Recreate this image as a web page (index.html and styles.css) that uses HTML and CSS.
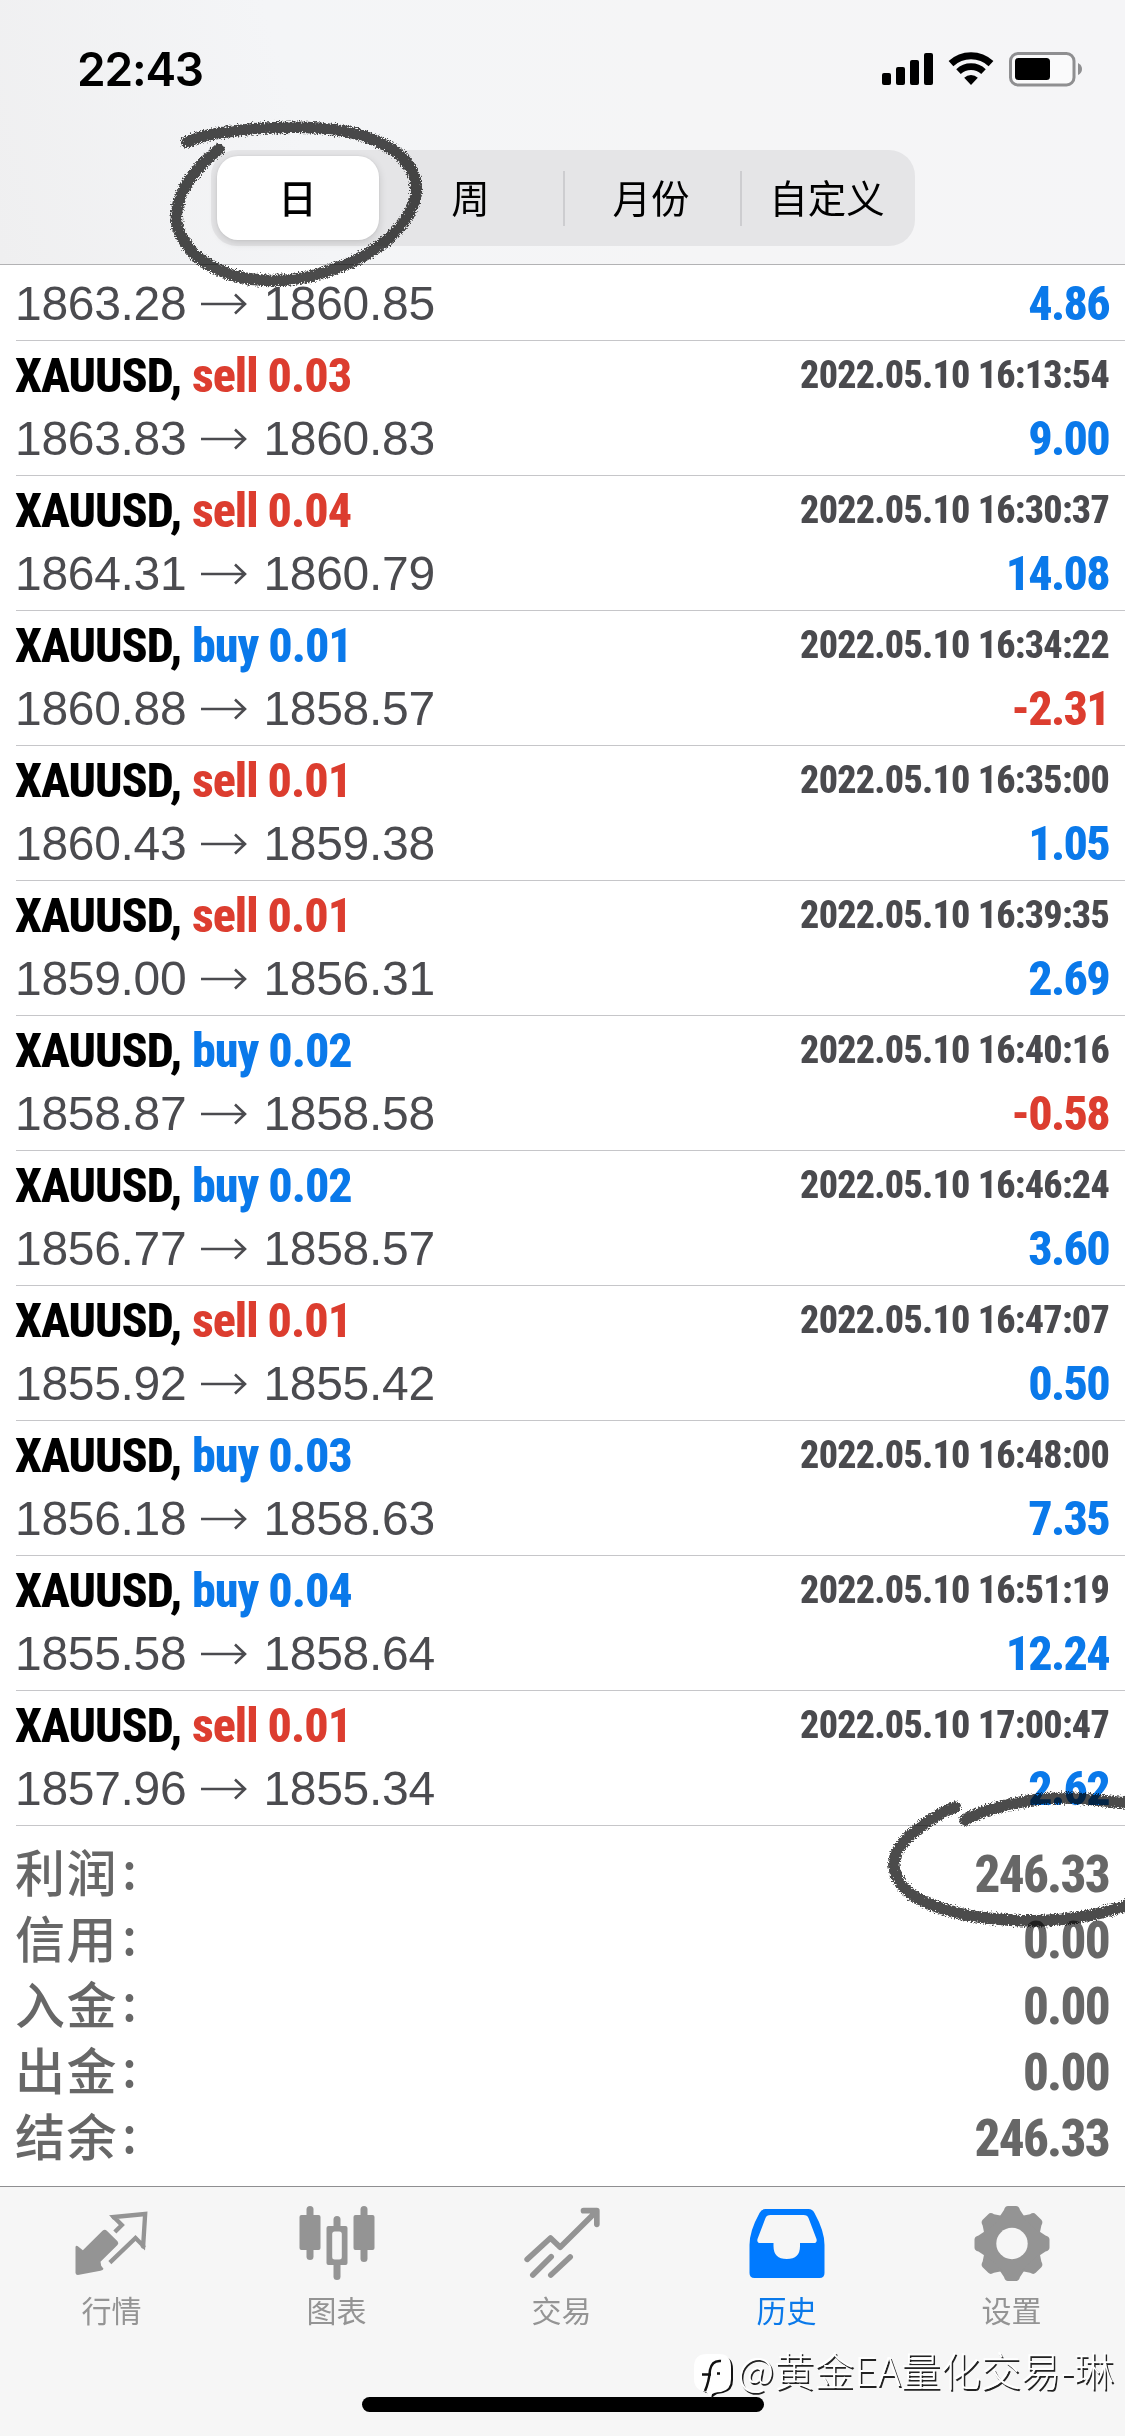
FILE: index.html
```
<!DOCTYPE html>
<html lang="zh-CN">
<head>
<meta charset="utf-8">
<title>历史</title>
<link rel="stylesheet" href="styles.css">
</head>
<body>
<div class="screen">
  <header class="header">
    <div class="status">
      <span class="clock">22:43</span>
      <svg class="status-icons" width="202" height="38" viewBox="882 50 202 38">
        <rect x="882" y="73" width="9" height="12" rx="2"/>
        <rect x="896" y="67" width="9" height="18" rx="2"/>
        <rect x="910" y="60" width="9" height="25" rx="2"/>
        <rect x="924" y="53" width="9" height="32" rx="2"/>
        <path d="M951 63.6A29.3 29.3 0 0 1 991 63.6" fill="none" stroke="#000" stroke-width="7"/>
        <path d="M958.5 71.6A18.3 18.3 0 0 1 983.5 71.6" fill="none" stroke="#000" stroke-width="6.6"/>
        <path d="M964.2 77.7A10 10 0 0 1 977.8 77.7L971 85Z"/>
        <rect x="1010.5" y="53.5" width="63.5" height="31.5" rx="7.5" fill="#fafafb" stroke="#8f8f91" stroke-width="3"/>
        <rect x="1015" y="58" width="35" height="22" rx="3.5"/>
        <path d="M1078 63Q1082 65 1082 69T1078 75Z" fill="#8f8f91"/>
      </svg>
    </div>
    <nav class="segments">
      <span class="segment selected">日</span>
      <span class="segment">周</span>
      <span class="segment ruled">月份</span>
      <span class="segment ruled">自定义</span>
    </nav>
  </header>

  <main class="history">
    <section class="deal partial">
      <div class="line"><span class="prices">1863.28<svg class="arrow" viewBox="0 0 46 22"><path d="M0 11H44M34 1.5L44 11L34 20.5"/></svg>1860.85</span><span class="profit">4.86</span></div>
    </section>
    <section class="deal">
      <div class="line"><span class="symbol">XAUUSD,</span><span class="order sell">sell 0.03</span><time>2022.05.10 16:13:54</time></div>
      <div class="line"><span class="prices">1863.83<svg class="arrow" viewBox="0 0 46 22"><path d="M0 11H44M34 1.5L44 11L34 20.5"/></svg>1860.83</span><span class="profit">9.00</span></div>
    </section>
    <section class="deal">
      <div class="line"><span class="symbol">XAUUSD,</span><span class="order sell">sell 0.04</span><time>2022.05.10 16:30:37</time></div>
      <div class="line"><span class="prices">1864.31<svg class="arrow" viewBox="0 0 46 22"><path d="M0 11H44M34 1.5L44 11L34 20.5"/></svg>1860.79</span><span class="profit">14.08</span></div>
    </section>
    <section class="deal">
      <div class="line"><span class="symbol">XAUUSD,</span><span class="order buy">buy 0.01</span><time>2022.05.10 16:34:22</time></div>
      <div class="line"><span class="prices">1860.88<svg class="arrow" viewBox="0 0 46 22"><path d="M0 11H44M34 1.5L44 11L34 20.5"/></svg>1858.57</span><span class="profit loss">-2.31</span></div>
    </section>
    <section class="deal">
      <div class="line"><span class="symbol">XAUUSD,</span><span class="order sell">sell 0.01</span><time>2022.05.10 16:35:00</time></div>
      <div class="line"><span class="prices">1860.43<svg class="arrow" viewBox="0 0 46 22"><path d="M0 11H44M34 1.5L44 11L34 20.5"/></svg>1859.38</span><span class="profit">1.05</span></div>
    </section>
    <section class="deal">
      <div class="line"><span class="symbol">XAUUSD,</span><span class="order sell">sell 0.01</span><time>2022.05.10 16:39:35</time></div>
      <div class="line"><span class="prices">1859.00<svg class="arrow" viewBox="0 0 46 22"><path d="M0 11H44M34 1.5L44 11L34 20.5"/></svg>1856.31</span><span class="profit">2.69</span></div>
    </section>
    <section class="deal">
      <div class="line"><span class="symbol">XAUUSD,</span><span class="order buy">buy 0.02</span><time>2022.05.10 16:40:16</time></div>
      <div class="line"><span class="prices">1858.87<svg class="arrow" viewBox="0 0 46 22"><path d="M0 11H44M34 1.5L44 11L34 20.5"/></svg>1858.58</span><span class="profit loss">-0.58</span></div>
    </section>
    <section class="deal">
      <div class="line"><span class="symbol">XAUUSD,</span><span class="order buy">buy 0.02</span><time>2022.05.10 16:46:24</time></div>
      <div class="line"><span class="prices">1856.77<svg class="arrow" viewBox="0 0 46 22"><path d="M0 11H44M34 1.5L44 11L34 20.5"/></svg>1858.57</span><span class="profit">3.60</span></div>
    </section>
    <section class="deal">
      <div class="line"><span class="symbol">XAUUSD,</span><span class="order sell">sell 0.01</span><time>2022.05.10 16:47:07</time></div>
      <div class="line"><span class="prices">1855.92<svg class="arrow" viewBox="0 0 46 22"><path d="M0 11H44M34 1.5L44 11L34 20.5"/></svg>1855.42</span><span class="profit">0.50</span></div>
    </section>
    <section class="deal">
      <div class="line"><span class="symbol">XAUUSD,</span><span class="order buy">buy 0.03</span><time>2022.05.10 16:48:00</time></div>
      <div class="line"><span class="prices">1856.18<svg class="arrow" viewBox="0 0 46 22"><path d="M0 11H44M34 1.5L44 11L34 20.5"/></svg>1858.63</span><span class="profit">7.35</span></div>
    </section>
    <section class="deal">
      <div class="line"><span class="symbol">XAUUSD,</span><span class="order buy">buy 0.04</span><time>2022.05.10 16:51:19</time></div>
      <div class="line"><span class="prices">1855.58<svg class="arrow" viewBox="0 0 46 22"><path d="M0 11H44M34 1.5L44 11L34 20.5"/></svg>1858.64</span><span class="profit">12.24</span></div>
    </section>
    <section class="deal">
      <div class="line"><span class="symbol">XAUUSD,</span><span class="order sell">sell 0.01</span><time>2022.05.10 17:00:47</time></div>
      <div class="line"><span class="prices">1857.96<svg class="arrow" viewBox="0 0 46 22"><path d="M0 11H44M34 1.5L44 11L34 20.5"/></svg>1855.34</span><span class="profit">2.62</span></div>
    </section>
    <section class="summary">
      <div class="total"><span class="label">利润<i class="colon">:</i></span><span class="amount">246.33</span></div>
      <div class="total"><span class="label">信用<i class="colon">:</i></span><span class="amount">0.00</span></div>
      <div class="total"><span class="label">入金<i class="colon">:</i></span><span class="amount">0.00</span></div>
      <div class="total"><span class="label">出金<i class="colon">:</i></span><span class="amount">0.00</span></div>
      <div class="total"><span class="label">结余<i class="colon">:</i></span><span class="amount">246.33</span></div>
    </section>
  </main>

  <footer class="tabbar">
    <nav class="tabs">
      <div class="tab">
        <svg class="tab-icon" viewBox="7.5 0 300 285">
          <path d="M126 107Q133 101 139 107L171 139Q176 145 171 150L120 200L122 212L129 221Q128 226 120 227L52 240Q46 240 45 234V155Q48 150 52 154L67 166Z" fill="#949494"/>
          <path d="M163 111L184 90L160 66L254 57L248 152L225 129L148 203" fill="none" stroke="#949494" stroke-width="13" stroke-linejoin="miter"/>
          <circle cx="160" cy="67" r="7" fill="#949494"/><circle cx="248" cy="154" r="7" fill="#949494"/>
        </svg>
        <span>行情</span>
      </div>
      <div class="tab">
        <svg class="tab-icon" viewBox="287.5 2195 100 95" fill="#949494">
          <rect x="306" y="2206" width="7" height="54" rx="3.5"/><rect x="299" y="2215" width="21" height="35" rx="2"/>
          <rect x="360" y="2206" width="7" height="56" rx="3.5"/><rect x="353" y="2215" width="21" height="35" rx="2"/>
          <rect x="333" y="2216" width="7" height="64" rx="3.5"/><rect x="326" y="2226" width="21" height="39" rx="2"/>
          <rect x="331.7" y="2231.5" width="9.6" height="28" rx="2.5" fill="#f6f6f6"/>
        </svg>
        <span>图表</span>
      </div>
      <div class="tab">
        <svg class="tab-icon" viewBox="7.5 0 300 285" fill="none" stroke="#949494" stroke-width="17" stroke-linecap="round">
          <path d="M50 193L120 129L149 157L252 55M219 47H259V88" stroke-linejoin="round"/>
          <path d="M67 240L122 185M121 240L179 186"/>
        </svg>
        <span>交易</span>
      </div>
      <div class="tab active">
        <svg class="tab-icon" viewBox="737.5 2195 100 95">
          <path fill="#007aff" fill-rule="evenodd" d="M765 2209H808Q812 2209 814 2213Q824 2231 824 2245V2273Q824 2278 819 2278H754Q749 2278 749 2273V2245Q749 2231 759 2213Q761 2209 765 2209ZM770 2215Q766 2215 765 2218L757 2239Q756 2243 760 2243H773V2246Q773 2259 786.3 2259T799.5 2246V2243H813Q817 2243 816 2239L808 2218Q807 2215 803 2215Z"/>
        </svg>
        <span>历史</span>
      </div>
      <div class="tab">
        <svg class="tab-icon" viewBox="962.5 2195 100 95">
          <defs><path id="tooth" d="M-13 -26L-8 -33.5Q-7 -37.5 -4 -37.5H4Q7 -37.5 8 -33.5L13 -26Z"/></defs>
          <g transform="translate(1011.5 2243.5)" fill="#949494">
            <circle r="29.5"/>
            <use href="#tooth"/><use href="#tooth" transform="rotate(45)"/><use href="#tooth" transform="rotate(90)"/><use href="#tooth" transform="rotate(135)"/>
            <use href="#tooth" transform="rotate(180)"/><use href="#tooth" transform="rotate(225)"/><use href="#tooth" transform="rotate(270)"/><use href="#tooth" transform="rotate(315)"/>
            <circle r="15.7" fill="#f6f6f6"/>
          </g>
        </svg>
        <span>设置</span>
      </div>
    </nav>
    <div class="home-indicator"></div>
  </footer>

  <svg class="ink" width="1125" height="2436" viewBox="0 0 1125 2436">
    <defs>
      <filter id="crayon" filterUnits="userSpaceOnUse" x="0" y="0" width="1125" height="2436">
        <feTurbulence type="fractalNoise" baseFrequency="0.7" numOctaves="2" seed="4"/>
        <feDisplacementMap in="SourceGraphic" scale="7" xChannelSelector="R" yChannelSelector="G"/>
      </filter>
    </defs>
    <g filter="url(#crayon)">
      <path d="M187 142C203 134 225 132 251 129C290 126 310 127 337 130C360 133 380 141 398 153C412 166 418 180 416 195C412 214 402 226 387 240C368 256 345 267 315 275C290 282 268 282 244 278C225 274 208 266 195 255C180 238 174 225 177 210C179 192 190 178 204 162L219 149"/>
      <path d="M955 1807C940 1813 927 1821 913 1833C898 1846 893 1856 894 1867C897 1883 906 1893 923 1901C944 1911 970 1917 997 1919C1025 1922 1055 1921 1080 1917C1100 1914 1115 1910 1135 1902"/>
      <path d="M965 1820C980 1811 1000 1806 1027 1801C1050 1797 1070 1797 1097 1800L1135 1804"/>
    </g>
  </svg>

  <div class="watermark">
    <svg class="watermark-logo" width="44" height="46" viewBox="0 0 44 46">
      <path d="M15 3H27Q40 3 40 16V27Q40 38 30 40L24 41Q20 43 18 46L19 41Q5 40 5 27Z" fill="#111"/>
      <path d="M14 1H26Q38 1 38 14V26Q38 37 28 39Q20 39 17 43L13 39Q1 37 1 26V14Q1 1 14 1Z" fill="#fff"/>
      <path d="M28 8Q19 7 17 17Q16 29 12 38M9 21.500H18M24 20.500H27" fill="none" stroke="#111" stroke-width="2.500"/>
    </svg>
    <span>@黄金EA量化交易-琳</span>
  </div>
</div>
</body>
</html>
```
FILE: styles.css
```
* { box-sizing: border-box; }
body {
  margin: 0;
  background: #fff;
  font-family: "Noto Sans CJK SC", sans-serif;
}
.screen {
  position: relative;
  width: 1125px;
  height: 2436px;
  display: flex;
  flex-direction: column;
  overflow: hidden;
}

/* status bar and period switch */
.header {
  height: 265px;
  flex: none;
  border-bottom: 1px solid #b2b2b4;
  background: linear-gradient(75deg, #efeff0 0%, #f4f5f7 28%, #f5f5f6 60%, #f5f5f7 100%);
}
.status {
  height: 150px;
  padding: 50px 41px 0 77px;
  display: flex;
  justify-content: space-between;
  align-items: flex-start;
}
.clock {
  font: 600 46px/38px Inter, sans-serif;
  letter-spacing: -1.2px;
}
.segments {
  width: 704px;
  height: 96px;
  margin: 0 auto;
  padding: 6px;
  border-radius: 26px;
  background: #e5e5e7;
  display: grid;
  grid-template-columns: 162px 184px 177px 175px;
}
.segment {
  display: flex;
  align-items: center;
  justify-content: center;
  padding-bottom: 3px;
  font-size: 38.5px;
  line-height: 81px;
}
.segment.selected {
  border-radius: 21px;
  background: #fff;
  box-shadow: 0 3px 8px rgba(0, 0, 0, .14), 0 0 2px rgba(0, 0, 0, .08);
  font-weight: 500;
}
.segment.ruled {
  background: linear-gradient(#cdcdd0, #cdcdd0) 0 50% / 2px 55px no-repeat;
}

/* closed deals */
.history { flex: 1; }
.deal {
  height: 135px;
  margin-left: 16px;
  padding: 3px 16px 0 0;
  border-top: 1px solid #c6c6c9;
}
.deal.partial {
  height: 75px;
  padding-top: 7px;
  border-top: 0;
}
.line {
  display: flex;
  align-items: baseline;
  height: 63px;
  line-height: 63px;
  white-space: nowrap;
}
.symbol, .order, .profit, time, .amount {
  font-family: "Roboto Condensed", Roboto, sans-serif;
  font-weight: 800;
}
.symbol, .order, .profit { font-size: 48px; }
.symbol {
  width: 177px;
  margin-left: -1px;
  letter-spacing: -1px;
}
.order { letter-spacing: -1px; }
.sell { color: #dc3d2f; }
.buy { color: #0a79ea; }
time {
  align-self: flex-start;
  margin-left: auto;
  font-size: 38px;
  font-weight: 800;
  line-height: 63px;
  letter-spacing: -0.75px;
  color: #4a4a4e;
}
.prices {
  display: flex;
  align-items: baseline;
  font: 48px/63px "Liberation Sans", Arial, sans-serif;
  letter-spacing: -0.3px;
  margin-left: -1px;
  color: #4b4b4f;
}
.arrow {
  width: 46px;
  height: 22px;
  margin: 0 16px 0 15px;
  align-self: center;
  fill: none;
  stroke: #4b4b4f;
  stroke-width: 2.6;
}
.profit {
  margin-left: auto;
  letter-spacing: -1.7px;
  color: #0a79ea;
}
.profit.loss { color: #dc3d2f; }

/* totals */
.summary {
  margin-left: 16px;
  padding: 16px 16px 0 0;
  border-top: 1px solid #c6c6c9;
}
.total {
  height: 66px;
  display: flex;
  justify-content: space-between;
  line-height: 66px;
  color: #676767;
}
.label {
  margin-left: -1px;
  font-size: 50px;
  font-weight: 500;
  line-height: 57px;
  letter-spacing: 1.5px;
}
.colon {
  margin-left: 4px;
  font-style: normal;
  vertical-align: 3px;
  line-height: 1;
}
.amount {
  font-size: 51px;
  letter-spacing: -1.7px;
}

/* bottom navigation */
.tabbar {
  height: 250px;
  flex: none;
  border-top: 1px solid #8f8f91;
  background: #f6f6f6;
}
.tabs {
  height: 210px;
  display: grid;
  grid-template-columns: repeat(5, 1fr);
}
.tab {
  display: flex;
  flex-direction: column;
  align-items: center;
  padding: 8px 2px 0 0;
  color: #949494;
  font-size: 30px;
  line-height: 39px;
}
.tab.active { color: #0a79ea; }
.tab-icon {
  width: 100px;
  height: 95px;
  margin-right: -2px;
}
.home-indicator {
  width: 402px;
  height: 15px;
  margin: 0 auto;
  border-radius: 8px;
  background: #000;
}

/* crayon circles drawn over the page */
.ink {
  position: absolute;
  left: 0;
  top: 0;
  fill: none;
  stroke: #4c4c4c;
  stroke-width: 11.5;
  stroke-linecap: round;
  stroke-linejoin: round;
  mix-blend-mode: multiply;
}

.watermark {
  position: absolute;
  right: 11px;
  top: 2353px;
  display: flex;
  gap: 1px;
  color: #fff;
  font-size: 40px;
  font-weight: 300;
  line-height: 33px;
  white-space: nowrap;
  text-shadow: 1.5px 1.5px 0.5px #222;
}
```
